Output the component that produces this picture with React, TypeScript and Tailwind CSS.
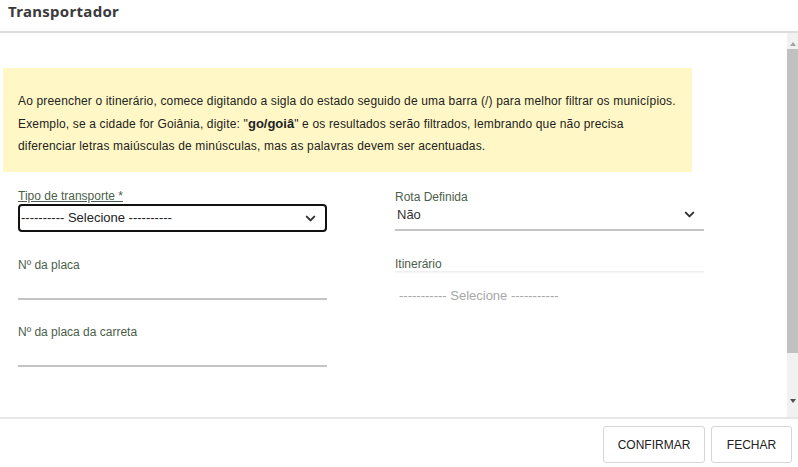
import { ChevronDown } from 'lucide-react'

const label = 'text-[12px] leading-[13px] text-[#4b5e4b]'

function LineInput({ text }: { text: string }) {
  return (
    <div className="flex flex-col">
      <p className={label}>{text}</p>
      <div className="h-[28px] border-b-2 border-[#c4c4c4]" />
    </div>
  )
}

export default function App() {
  return (
    <div className="flex h-[467px] w-[798px] flex-col bg-white font-['Liberation_Sans',Arial,sans-serif] text-[#333]">
      {/* header */}
      <div className="flex h-[33px] items-center border-b-2 border-[#dcdcdc] px-2 pb-[8px]">
        <h2 className="font-['Noto_Sans',sans-serif] text-[15px] font-bold tracking-[0.3px] text-[#3a3a3a]">Transportador</h2>
      </div>

      {/* body */}
      <div className="flex h-[384px]">
        <div className="flex-1 pt-[35px]">
          <div className="ml-[3px] h-[104px] w-[689px] bg-[#fff8c6] pl-[15px] pt-[22px] text-[12px] leading-[22.5px] tracking-[0.16px] text-[#222]">
            <p>Ao preencher o itinerário, comece digitando a sigla do estado seguido de uma barra (/) para melhor filtrar os municípios.</p>
            <p>
              Exemplo, se a cidade for Goiânia, digite: "<b className="text-[13px] tracking-normal">go/goiâ</b>" e os resultados serão filtrados, lembrando que não precisa
            </p>
            <p>diferenciar letras maiúsculas de minúsculas, mas as palavras devem ser acentuadas.</p>
          </div>

          <div className="mt-[18px] grid grid-cols-[309px_309px] gap-x-[68px] pl-[18px]">
            {/* left column */}
            <div className="flex flex-col">
              <p className={`${label} underline`}>Tipo de transporte *</p>
              <div className="mt-[1px] flex h-[28px] items-center justify-between rounded-[4px] border-2 border-[#111] pl-[1px] pr-[7px] text-[13px] text-[#222]">
                <span>---------- Selecione ----------</span>
                <ChevronDown size={15} strokeWidth={3.2} className="text-[#333]" />
              </div>
              <div className="mt-[27px]">
                <LineInput text="Nº da placa" />
              </div>
              <div className="mt-[26px]">
                <LineInput text="Nº da placa da carreta" />
              </div>
            </div>

            {/* right column */}
            <div className="flex flex-col">
              <p className={`${label} mt-[1px]`}>Rota Definida</p>
              <div className="flex h-[27px] items-center justify-between border-b-2 border-[#c4c4c4] pb-[4px] pl-[2px] pr-[7px] text-[13px] text-[#333]">
                <span>Não</span>
                <ChevronDown size={15} strokeWidth={3.2} className="text-[#333]" />
              </div>
              <p className={`${label} mt-[27px]`}>Itinerário</p>
              <div className="h-[3px] bg-gradient-to-b from-[#ececec] to-white" />
              <p className="mt-[12px] pl-[4px] text-[13px] text-[#a8a8a8]">----------- Selecione -----------</p>
            </div>
          </div>
        </div>

        {/* scrollbar */}
        <div className="flex w-[11px] flex-col items-center bg-[#f1f1f1]">
          <div className="mt-[9px] h-0 w-0 border-x-[3px] border-b-[4px] border-x-transparent border-b-[#a3a3a3]" />
          <div className="mt-[3px] h-[304px] w-[11px] bg-[#c1c1c1]" />
          <div className="mt-[46px] h-0 w-0 border-x-[3px] border-t-[4px] border-x-transparent border-t-[#505050]" />
        </div>
      </div>

      {/* footer */}
      <div className="flex flex-1 items-start justify-end gap-[6px] border-t-2 border-[#e6e6e6] pr-[6px] pt-[7px]">
        <button className="h-[37px] w-[102px] rounded-[3px] border border-[#d6d6d6] bg-white text-[12px] text-[#222]">CONFIRMAR</button>
        <button className="h-[37px] w-[81px] rounded-[3px] border border-[#d6d6d6] bg-white text-[12px] text-[#222]">FECHAR</button>
      </div>
    </div>
  )
}
